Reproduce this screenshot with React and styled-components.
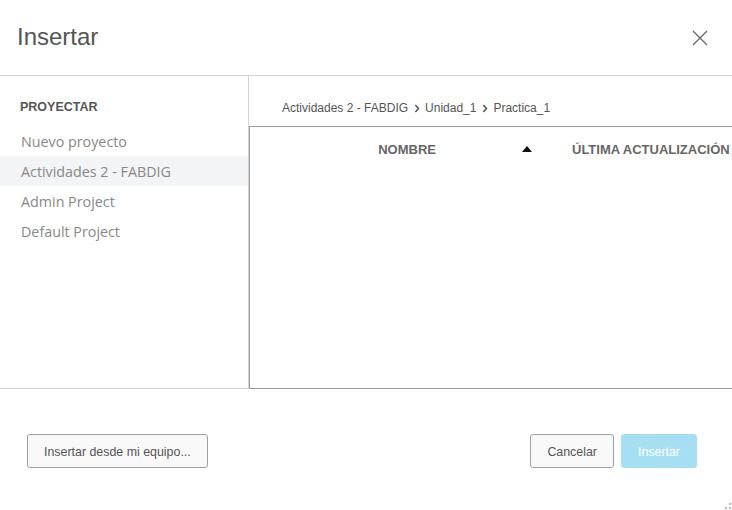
import React from 'react';
import styled, { createGlobalStyle } from 'styled-components';

const GlobalStyle = createGlobalStyle`
html, body {
margin: 0;
padding: 0;
background: #ffffff;
}
body {
font-family: "Liberation Sans", Arial, sans-serif;
}
* {
box-sizing: border-box;
}
`

const projects = ['Nuevo proyecto', 'Actividades 2 - FABDIG', 'Admin Project', 'Default Project'];
const crumbs = ['Actividades 2 - FABDIG', 'Unidad_1', 'Practica_1'];

const Chevron = () => (
  <ChevronIcon viewBox="0 0 6 10" width="6" height="9">
    <path d="M1.2 1.2 L4.6 5 L1.2 8.8" fill="none" stroke="#555" strokeWidth="1.7" />
  </ChevronIcon>
);

const App = () => {
  return (
    <>
      <GlobalStyle />
      <Modal>
        <Header>
          <Title>Insertar</Title>
          <CloseButton aria-label="Cerrar">
            <svg viewBox="0 0 16 16" width="16" height="16">
              <path d="M1 1 L15 15 M15 1 L1 15" stroke="#666" strokeWidth="1.3" fill="none" />
            </svg>
          </CloseButton>
        </Header>

        <Body>
          <Sidebar>
            <SidebarTitle>PROYECTAR</SidebarTitle>
            {projects.map((p) => (
              <ProjectItem key={p} selected={p === 'Actividades 2 - FABDIG'}>
                {p}
              </ProjectItem>
            ))}
          </Sidebar>

          <Content>
            <Breadcrumb>
              {crumbs.map((c, i) => (
                <React.Fragment key={c}>
                  {i > 0 && <Chevron />}
                  <Crumb>{c}</Crumb>
                </React.Fragment>
              ))}
            </Breadcrumb>
            <Table>
              <TableHead>
                <HeadCell width="186px" align="flex-end">NOMBRE</HeadCell>
                <SortCell>
                  <svg viewBox="0 0 10 6" width="10" height="6">
                    <path d="M0 6 L5 0 L10 6 Z" fill="#111" />
                  </svg>
                </SortCell>
                <HeadCell width="200px" align="flex-start">ÚLTIMA ACTUALIZACIÓN</HeadCell>
              </TableHead>
            </Table>
          </Content>
        </Body>

        <Footer>
          <Button>Insertar desde mi equipo...</Button>
          <FooterRight>
            <Button>Cancelar</Button>
            <PrimaryButton disabled>Insertar</PrimaryButton>
          </FooterRight>
          <Grip viewBox="0 0 6 6" width="6" height="6">
            <rect x="4" y="0" width="2" height="2" fill="#bbb" />
            <rect x="0" y="4" width="2" height="2" fill="#bbb" />
            <rect x="4" y="4" width="2" height="2" fill="#bbb" />
          </Grip>
        </Footer>
      </Modal>
    </>
  )
}

const Modal = styled.div`
position: relative;
display: flex;
flex-direction: column;
width: 732px;
height: 510px;
background: #ffffff;
overflow: hidden;
`
const Header = styled.div`
display: flex;
align-items: center;
justify-content: space-between;
height: 76px;
padding: 0 24px 0 17px;
border-bottom: 1px solid #d4d4d4;
`
const Title = styled.h1`
margin: 0 0 1px 0;
font-family: "Liberation Sans", Arial, sans-serif;
font-size: 24px;
font-weight: normal;
color: #555555;
`
const CloseButton = styled.button`
display: flex;
align-items: center;
justify-content: center;
padding: 0;
background: transparent;
border: none;
cursor: pointer;
`
const Body = styled.div`
display: flex;
height: 313px;
`
const Sidebar = styled.div`
display: flex;
flex-direction: column;
width: 249px;
padding-top: 23px;
border-right: 1px solid #d4d4d4;
border-bottom: 1px solid #d4d4d4;
`
const SidebarTitle = styled.div`
padding: 0 20px;
margin-bottom: 11px;
font-family: "Liberation Sans", Arial, sans-serif;
font-size: 12.5px;
font-weight: bold;
line-height: 16px;
color: #555555;
`
const ProjectItem = styled.div`
display: flex;
align-items: center;
height: 30px;
padding: 0 21px;
font-family: "Open Sans", sans-serif;
font-size: 14.3px;
color: #888888;
background: ${props => (props.selected ? '#f3f4f6' : 'transparent')};
cursor: pointer;
`
const Content = styled.div`
display: flex;
flex-direction: column;
flex: 1;
min-width: 0;
`
const Breadcrumb = styled.div`
display: flex;
align-items: center;
gap: 5.5px;
height: 50px;
padding: 14px 0 0 33px;
`
const Crumb = styled.span`
font-family: "Liberation Sans", Arial, sans-serif;
font-size: 12px;
color: #555555;
white-space: nowrap;
`
const ChevronIcon = styled.svg`
flex-shrink: 0;
margin-top: 1px;
`
const Table = styled.div`
flex: 1;
border-top: 1px solid #9a9a9a;
border-left: 1px solid #9a9a9a;
border-bottom: 1px solid #9a9a9a;
`
const TableHead = styled.div`
display: flex;
align-items: center;
height: 44px;
white-space: nowrap;
`
const HeadCell = styled.div`
display: flex;
justify-content: ${props => props.align};
width: ${props => props.width};
flex-shrink: 0;
font-family: "Liberation Sans", Arial, sans-serif;
font-size: 13px;
font-weight: bold;
color: #666666;
`
const SortCell = styled.div`
display: flex;
justify-content: flex-end;
width: 96px;
margin-right: 40px;
flex-shrink: 0;
`
const Footer = styled.div`
display: flex;
align-items: flex-start;
justify-content: space-between;
flex: 1;
padding: 45px 35px 0 27px;
`
const FooterRight = styled.div`
display: flex;
gap: 7px;
`
const Button = styled.button`
height: 34px;
padding: 2px 16px 0;
font-family: "Liberation Sans", Arial, sans-serif;
font-size: 12.4px;
color: #555555;
background: #f9f9f9;
border: 1px solid #a0a0a0;
border-radius: 3px;
cursor: pointer;
`
const PrimaryButton = styled.button`
height: 34px;
padding: 2px 16px 0;
font-family: "Liberation Sans", Arial, sans-serif;
font-size: 12.4px;
color: #ffffff;
background: #a6dff4;
border: 1px solid #a6dff4;
border-radius: 3px;
`
const Grip = styled.svg`
position: absolute;
right: 1px;
bottom: 1px;
`

export default App
